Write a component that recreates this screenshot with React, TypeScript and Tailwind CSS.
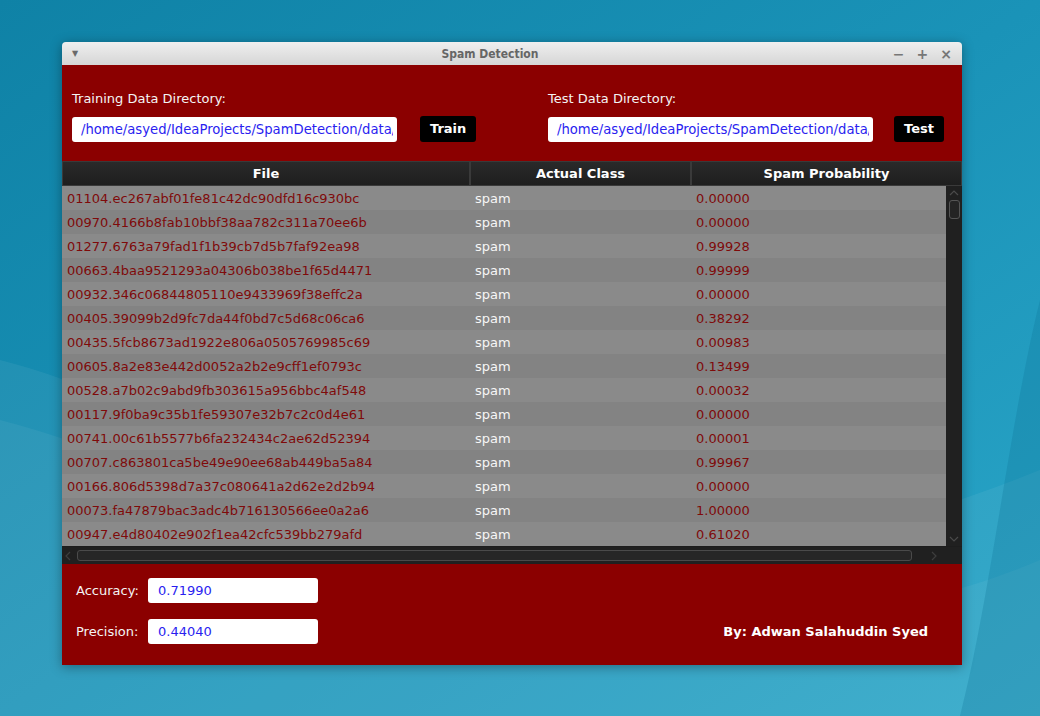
import React from "react";

const rows = [
  ["01104.ec267abf01fe81c42dc90dfd16c930bc", "0.00000"],
  ["00970.4166b8fab10bbf38aa782c311a70ee6b", "0.00000"],
  ["01277.6763a79fad1f1b39cb7d5b7faf92ea98", "0.99928"],
  ["00663.4baa9521293a04306b038be1f65d4471", "0.99999"],
  ["00932.346c06844805110e9433969f38effc2a", "0.00000"],
  ["00405.39099b2d9fc7da44f0bd7c5d68c06ca6", "0.38292"],
  ["00435.5fcb8673ad1922e806a0505769985c69", "0.00983"],
  ["00605.8a2e83e442d0052a2b2e9cff1ef0793c", "0.13499"],
  ["00528.a7b02c9abd9fb303615a956bbc4af548", "0.00032"],
  ["00117.9f0ba9c35b1fe59307e32b7c2c0d4e61", "0.00000"],
  ["00741.00c61b5577b6fa232434c2ae62d52394", "0.00001"],
  ["00707.c863801ca5be49e90ee68ab449ba5a84", "0.99967"],
  ["00166.806d5398d7a37c080641a2d62e2d2b94", "0.00000"],
  ["00073.fa47879bac3adc4b716130566ee0a2a6", "1.00000"],
  ["00947.e4d80402e902f1ea42cfc539bb279afd", "0.61020"],
];

const font = { fontFamily: '"DejaVu Sans", "Liberation Sans", sans-serif' };

function DirField({ label, button, gap }: { label: string; button: string; gap: string }) {
  return (
    <div className="flex flex-col w-[476px] shrink-0">
      <span className="text-[13px] leading-[17px] text-[#f4f4f4]">{label}</span>
      <div className={`flex items-center ${gap} mt-[9px]`}>
        <div className="w-[325px] h-[25px] bg-white rounded-[3px] pl-[9px] pr-[4px] overflow-hidden whitespace-nowrap text-[13.2px] leading-[25px] text-[#2a1ef0]">
          <div className="overflow-hidden">/home/asyed/IdeaProjects/SpamDetection/data/</div>
        </div>
        <button className="h-[26px] px-[10px] bg-black rounded-[3px] text-white text-[13px] font-bold">
          {button}
        </button>
      </div>
    </div>
  );
}

function Header({ w, children }: { w: string; children: React.ReactNode }) {
  return (
    <div
      className={`${w} h-full flex items-center justify-center border border-[#3a3a3a] bg-gradient-to-b from-[#2a2a2a] to-[#1e1e1e] text-white text-[13px] font-bold`}
    >
      {children}
    </div>
  );
}

export default function App() {
  return (
    <div
      className="relative w-[1040px] h-[716px] overflow-hidden bg-gradient-to-br from-[#0f82a6] via-[#1a93b8] to-[#2aa6c8]"
      style={font}
    >
      <svg className="absolute inset-0" width="1040" height="716" viewBox="0 0 1040 716">
        <path d="M0 360 C120 390 250 470 420 520 C620 580 820 560 1040 470 L1040 716 L0 716 Z" fill="#ffffff" opacity="0.06" />
        <path d="M0 420 C160 460 300 560 520 600 C720 640 900 620 1040 560 L1040 716 L0 716 Z" fill="#ffffff" opacity="0.05" />
        <path d="M960 716 C990 600 1010 420 1040 300 L1040 716 Z" fill="#0a6f93" opacity="0.25" />
      </svg>

      <div className="relative pt-[42px] pl-[62px]">
        <div className="w-[900px] shadow-[0_2px_12px_rgba(0,0,0,0.35)] rounded-t-[4px] overflow-hidden">
          {/* title bar */}
          <div className="h-[23px] flex items-center bg-gradient-to-b from-[#efefef] to-[#d6d6d6] px-[10px] text-[#6a6a6a]">
            <span className="text-[8px] w-[60px]">▼</span>
            <span
              className="flex-1 text-center text-[12px] font-bold text-[#666] pr-[44px]"
              style={{ fontFamily: '"DejaVu Sans Condensed", "Open Sans", sans-serif' }}
            >
              Spam Detection
            </span>
            <div className="w-[60px] flex justify-end gap-[12px] text-[14px] font-bold text-[#777] leading-none">
              <span>−</span>
              <span>+</span>
              <span>×</span>
            </div>
          </div>

          {/* body */}
          <div className="bg-[#8b0000] h-[600px] flex flex-col">
            <div className="flex pl-[10px] pt-[25px] pb-[19px]">
              <DirField label="Training Data Directory:" button="Train" gap="gap-[23px]" />
              <DirField label="Test Data Directory:" button="Test" gap="gap-[21px]" />
            </div>

            {/* table */}
            <div className="h-[403px] bg-[#1d1d1d] flex flex-col">
              <div className="h-[26px] flex">
                <Header w="w-[408px]">File</Header>
                <Header w="w-[221px]">Actual Class</Header>
                <Header w="w-[271px]">Spam Probability</Header>
              </div>
              <div className="flex h-[360px]">
                <div className="w-[884px] flex flex-col">
                  {rows.map(([f, p], i) => (
                    <div
                      key={f}
                      className={`h-[24px] flex items-center text-[13px] ${i % 2 === 0 ? "bg-[#8a8a8a]" : "bg-[#838383]"}`}
                    >
                      <span className="w-[408px] pl-[5px] text-[#7f0a0a]">{f}</span>
                      <span className="w-[221px] pl-[5px] text-[#f6f6f6]">spam</span>
                      <span className="pl-[5px] text-[#7f0a0a]">{p}</span>
                    </div>
                  ))}
                </div>
                <div className="flex-1 flex flex-col items-center bg-[#202020] pt-[4px]">
                  <svg width="10" height="6" viewBox="0 0 10 6">
                    <path d="M1 5 L5 1 L9 5" stroke="#4a4a4a" fill="none" strokeWidth="1.2" />
                  </svg>
                  <div className="mt-[4px] w-[11px] h-[19px] rounded-[3px] border border-[#555] bg-[#242424]" />
                  <div className="flex-1" />
                  <svg width="10" height="6" viewBox="0 0 10 6" className="mb-[4px]">
                    <path d="M1 1 L5 5 L9 1" stroke="#4a4a4a" fill="none" strokeWidth="1.2" />
                  </svg>
                </div>
              </div>
              <div className="h-[17px] mt-[1px] flex items-center bg-[#202020] px-[3px]">
                <svg width="6" height="10" viewBox="0 0 6 10">
                  <path d="M5 1 L1 5 L5 9" stroke="#3e3e3e" fill="none" strokeWidth="1.2" />
                </svg>
                <div className="ml-[6px] w-[835px] h-[11px] rounded-[3px] border border-[#4a4a4a] bg-[#262626]" />
                <div className="flex-1" />
                <svg width="6" height="10" viewBox="0 0 6 10" className="mr-[22px]">
                  <path d="M1 1 L5 5 L1 9" stroke="#3e3e3e" fill="none" strokeWidth="1.2" />
                </svg>
              </div>
            </div>

            {/* bottom */}
            <div className="flex items-end pl-[14px] pr-[34px] pt-[14px]">
              <div className="flex flex-col gap-[16px]">
                <div className="flex items-center">
                  <span className="w-[72px] text-[13px] text-[#f4f4f4]">Accuracy:</span>
                  <div className="w-[170px] h-[25px] bg-white rounded-[3px] pl-[10px] text-[13px] leading-[25px] text-[#2a1ef0]">
                    0.71990
                  </div>
                </div>
                <div className="flex items-center">
                  <span className="w-[72px] text-[13px] text-[#f4f4f4]">Precision:</span>
                  <div className="w-[170px] h-[25px] bg-white rounded-[3px] pl-[10px] text-[13px] leading-[25px] text-[#2a1ef0]">
                    0.44040
                  </div>
                </div>
              </div>
              <div className="flex-1" />
              <span className="text-[13px] font-bold text-white leading-[25px]">By: Adwan Salahuddin Syed</span>
            </div>
          </div>
        </div>
      </div>
    </div>
  );
}
